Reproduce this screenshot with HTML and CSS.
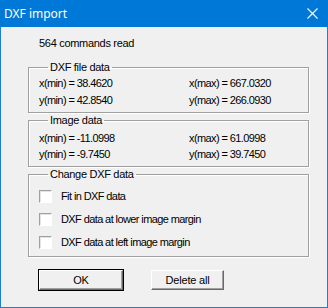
FILE: index.html
```html
<!DOCTYPE html>
<html lang="en">
<head>
    <meta charset="UTF-8">
    <title>DXF import</title>
    <link rel="stylesheet" href="styles.css">
</head>
<body>
    <div class="window">
        <div class="titlebar">
            <span class="title">DXF import</span>
            <svg class="close" width="11" height="11" viewBox="0 0 11 11">
                <path d="M0.5 0.5 L10.5 10.5 M10.5 0.5 L0.5 10.5" stroke="#fff" stroke-width="1.1" fill="none"/>
            </svg>
        </div>

        <div class="content">
            <p class="status">564 commands read</p>

            <fieldset class="group group-file">
                <legend>DXF file data</legend>
                <div class="values">
                    <span>x(min) = 38.4620</span>
                    <span>x(max) = 667.0320</span>
                    <span>y(min) = 42.8540</span>
                    <span>y(max) = 266.0930</span>
                </div>
            </fieldset>

            <fieldset class="group group-image">
                <legend>Image data</legend>
                <div class="values">
                    <span>x(min) = -11.0998</span>
                    <span>x(max) = 61.0998</span>
                    <span>y(min) = -9.7450</span>
                    <span>y(max) = 39.7450</span>
                </div>
            </fieldset>

            <fieldset class="group group-change">
                <legend>Change DXF data</legend>
                <label class="check"><span class="box"></span>Fit in DXF data</label>
                <label class="check"><span class="box"></span>DXF data at lower image margin</label>
                <label class="check"><span class="box"></span>DXF data at left image margin</label>
            </fieldset>

            <div class="buttons">
                <button class="btn btn-default">OK</button>
                <button class="btn btn-delete">Delete all</button>
            </div>
        </div>
    </div>
</body>
</html>
```

FILE: styles.css
```css
body {
    margin: 0;
    background: #fff;
    font-family: "Liberation Sans", Arial, sans-serif;
    font-size: 11px;
    letter-spacing: -0.6px;
    color: #000;
}
.window {
    width: 328px;
    height: 308px;
    box-sizing: border-box;
    border: 1px solid #1b7fd6;
    border-top: none;
    background: #f0f0f0;
    display: flex;
    flex-direction: column;
}
.titlebar {
    height: 26px;
    flex: none;
    background: #0078d7;
    color: #fff;
    display: flex;
    align-items: center;
    justify-content: space-between;
    padding: 0 10px 1px 4px;
    margin: 0 -1px;
}
.title {
    font-family: "Noto Sans", sans-serif;
    font-size: 12px;
    letter-spacing: 0;
}
.close {
    display: block;
    margin-top: 1px;
}
.content {
    padding: 0 0 0 27px;
}
.status {
    margin: 10px 0 0 11px;
    line-height: 13px;
    letter-spacing: -0.3px;
}
.group {
    width: 281px;
    box-sizing: border-box;
    margin: 0;
    border: 1px solid #a0a0a0;
    box-shadow: 1px 1px 0 #fff, inset 1px 1px 0 #fff;
    padding: 0 0 5px 10px;
    min-width: 0;
}
.group legend {
    line-height: 13px;
    padding: 0 2px;
    margin-left: 9px;
    letter-spacing: -0.3px;
}
.group-file {
    margin-top: 11px;
}
.group-image {
    margin-top: 1px;
}
.group-change {
    margin-top: 1px;
    padding-bottom: 7px;
}
.values {
    display: grid;
    grid-template-columns: 150px 1fr;
    row-gap: 4px;
    line-height: 13px;
    padding-top: 3px;
}
.group-image .values {
    row-gap: 3px;
    padding-top: 5px;
}
.check {
    display: flex;
    align-items: center;
    height: 13px;
    line-height: 13px;
    margin-top: 9px;
}
.check + .check {
    margin-top: 10px;
}
.box {
    width: 13px;
    height: 13px;
    box-sizing: border-box;
    border: 1px solid;
    border-color: #a0a0a0 #fff #fff #a0a0a0;
    box-shadow: inset 1px 1px 0 #e3e3e3;
    background: #fff;
    margin-right: 9px;
    flex: none;
}
.buttons {
    display: flex;
    gap: 28px;
    margin: 13px 0 0 11px;
}
.btn {
    height: 20px;
    font-family: "Liberation Sans", Arial, sans-serif;
    font-size: 11px;
    letter-spacing: -0.2px;
    color: #000;
    background: #f0f0f0;
    border: 1px solid;
    border-color: #fff #696969 #696969 #fff;
    box-shadow: inset -1px -1px 0 #a0a0a0;
    padding: 0;
}
.btn-default {
    width: 84px;
    outline: 1px solid #000;
    outline-offset: 0;
}
.btn-delete {
    width: 73px;
}
```
